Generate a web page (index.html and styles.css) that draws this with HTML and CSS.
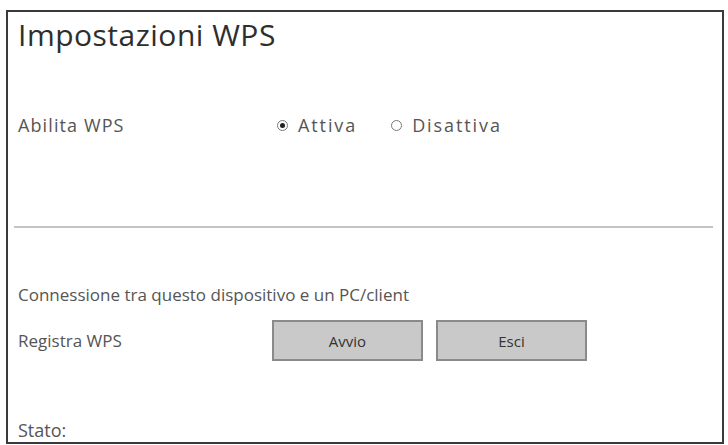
FILE: index.html
```html
<!DOCTYPE html>
<html lang="it">
<head>
  <meta charset="UTF-8">
  <meta name="viewport" content="width=device-width, initial-scale=1.0">
  <title>Impostazioni WPS</title>
  <link rel="stylesheet" href="styles.css">
</head>
<body>
  <div class="panel">
    <h1>Impostazioni WPS</h1>

    <div class="row enable-row">
      <span class="label spaced">Abilita WPS</span>
      <label class="radio"><span class="dot checked"></span>Attiva</label>
      <label class="radio"><span class="dot"></span>Disattiva</label>
    </div>

    <hr class="divider">

    <p class="note">Connessione tra questo dispositivo e un PC/client</p>
    <div class="row register-row">
      <span class="label">Registra WPS</span>
      <div class="buttons">
        <button type="button">Avvio</button>
        <button type="button">Esci</button>
      </div>
    </div>

    <p class="status">Stato:</p>
  </div>
</body>
</html>
```

FILE: styles.css
```css
/* Basic Reset */
* {
  margin: 0;
  padding: 0;
  box-sizing: border-box;
}

body {
  background: #fff;
  font-family: "Open Sans", "Noto Sans", sans-serif;
  color: #555;
  overflow: hidden;
}

.panel {
  margin: 10px 0 0 6px;
  width: 718px;
  height: 434px;
  border: 2px solid #3a3a3a;
  padding: 0 10px;
  display: flex;
  flex-direction: column;
  overflow: hidden;
}

h1 {
  font-size: 30px;
  font-weight: 400;
  color: #2e2e2e;
  letter-spacing: 0.5px;
  line-height: 36px;
  margin-top: 5px;
}

.row {
  display: flex;
  align-items: center;
}

.label {
  width: 254px;
  font-size: 17px;
}

/* top row: slightly larger, airy text */
.label.spaced {
  width: 259px;
  font-size: 18px;
  letter-spacing: 1.1px;
}

.enable-row {
  margin-top: 59px;
  height: 28px;
}

.radio {
  display: flex;
  align-items: center;
  font-size: 18px;
  letter-spacing: 1.9px;
  margin-right: 34px;
}

.dot {
  width: 11px;
  height: 11px;
  border: 1px solid #777;
  border-radius: 50%;
  margin-right: 10px;
  position: relative;
}

.dot.checked::after {
  content: "";
  position: absolute;
  top: 2px;
  left: 2px;
  width: 5px;
  height: 5px;
  border-radius: 50%;
  background: #222;
}

.divider {
  border: none;
  height: 2px;
  background: #c4c4c4;
  margin: 88px -1px 0 -4px;
}

.note {
  font-size: 17px;
  margin-top: 55px;
  line-height: 24px;
}

.register-row {
  margin-top: 13px;
  height: 41px;
}

.buttons {
  display: flex;
  gap: 13px;
}

button {
  width: 151px;
  height: 41px;
  background: #c9c9c9;
  border: 2px solid #8a8a8a;
  color: #333;
  font-family: inherit;
  font-size: 15px;
}

.status {
  font-size: 18px;
  margin-top: 57px;
  line-height: 24px;
}
```
